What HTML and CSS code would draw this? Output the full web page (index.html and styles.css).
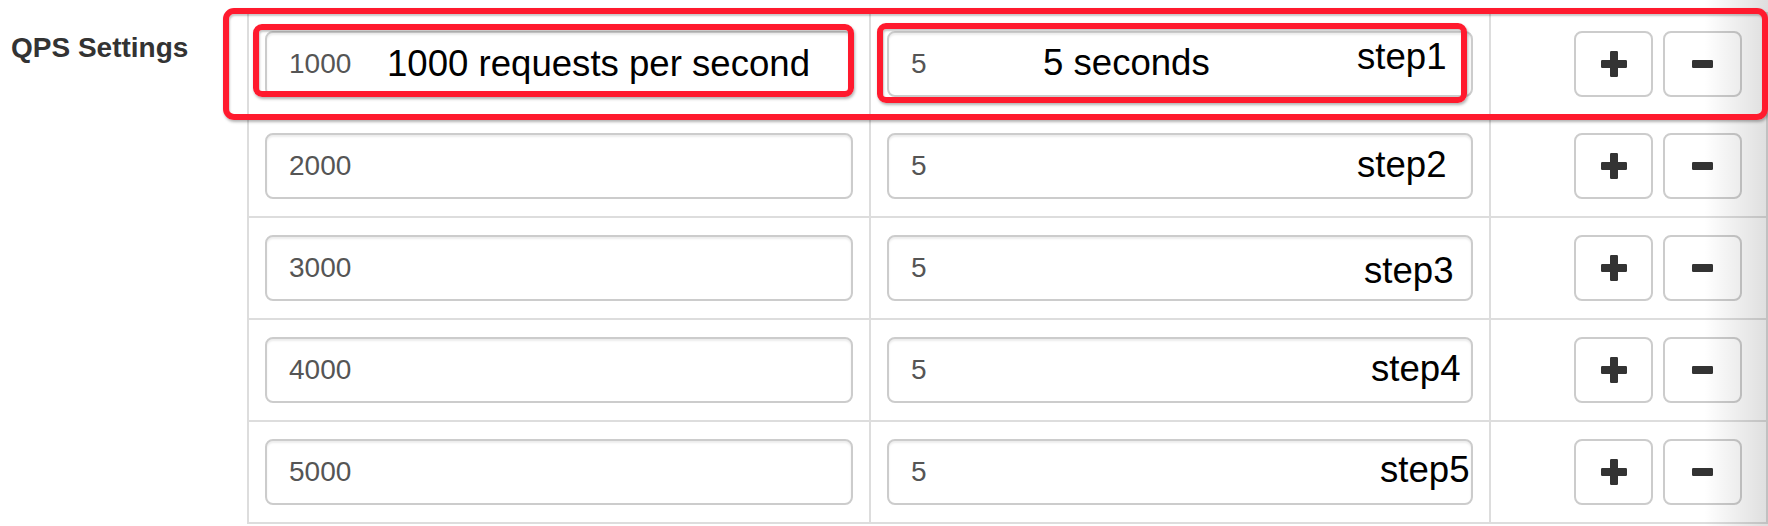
FILE: index.html
```html
<!DOCTYPE html>
<html>
<head>
<meta charset="utf-8">
<title>QPS Settings</title>
<link rel="stylesheet" href="styles.css">
</head>
<body>
<div class="page">
  <div class="form-row">
    <div class="row-label">QPS Settings</div>
    <div class="qps-table">
      <div class="cell"><div class="form-control">1000</div></div>
      <div class="cell"><div class="form-control">5</div></div>
      <div class="cell cell-actions">
        <button class="btn"><svg class="ico ico-plus" viewBox="0 0 26 26"><rect x="9" y="0" width="8" height="26" rx="1.2"/><rect x="0" y="9" width="26" height="8" rx="1.2"/></svg></button>
        <button class="btn"><svg class="ico ico-minus" viewBox="0 0 21 8"><rect x="0" y="0" width="21" height="8" rx="1.2"/></svg></button>
      </div>

      <div class="cell"><div class="form-control">2000</div></div>
      <div class="cell"><div class="form-control">5</div></div>
      <div class="cell cell-actions">
        <button class="btn"><svg class="ico ico-plus" viewBox="0 0 26 26"><rect x="9" y="0" width="8" height="26" rx="1.2"/><rect x="0" y="9" width="26" height="8" rx="1.2"/></svg></button>
        <button class="btn"><svg class="ico ico-minus" viewBox="0 0 21 8"><rect x="0" y="0" width="21" height="8" rx="1.2"/></svg></button>
      </div>

      <div class="cell"><div class="form-control">3000</div></div>
      <div class="cell"><div class="form-control">5</div></div>
      <div class="cell cell-actions">
        <button class="btn"><svg class="ico ico-plus" viewBox="0 0 26 26"><rect x="9" y="0" width="8" height="26" rx="1.2"/><rect x="0" y="9" width="26" height="8" rx="1.2"/></svg></button>
        <button class="btn"><svg class="ico ico-minus" viewBox="0 0 21 8"><rect x="0" y="0" width="21" height="8" rx="1.2"/></svg></button>
      </div>

      <div class="cell"><div class="form-control">4000</div></div>
      <div class="cell"><div class="form-control">5</div></div>
      <div class="cell cell-actions">
        <button class="btn"><svg class="ico ico-plus" viewBox="0 0 26 26"><rect x="9" y="0" width="8" height="26" rx="1.2"/><rect x="0" y="9" width="26" height="8" rx="1.2"/></svg></button>
        <button class="btn"><svg class="ico ico-minus" viewBox="0 0 21 8"><rect x="0" y="0" width="21" height="8" rx="1.2"/></svg></button>
      </div>

      <div class="cell"><div class="form-control">5000</div></div>
      <div class="cell"><div class="form-control">5</div></div>
      <div class="cell cell-actions">
        <button class="btn"><svg class="ico ico-plus" viewBox="0 0 26 26"><rect x="9" y="0" width="8" height="26" rx="1.2"/><rect x="0" y="9" width="26" height="8" rx="1.2"/></svg></button>
        <button class="btn"><svg class="ico ico-minus" viewBox="0 0 21 8"><rect x="0" y="0" width="21" height="8" rx="1.2"/></svg></button>
      </div>
    </div>
  </div>

  <div class="edge-shade"></div>

  <div class="annot annot-row"></div>
  <div class="annot annot-qps"></div>
  <div class="annot annot-dur"></div>

  <span class="note note-qps">1000 requests per second</span>
  <span class="note note-dur">5 seconds</span>
  <span class="note step step1">step1</span>
  <span class="note step step2">step2</span>
  <span class="note step step3">step3</span>
  <span class="note step step4">step4</span>
  <span class="note step step5">step5</span>
</div>
</body>
</html>
```

FILE: styles.css
```css
* {
  box-sizing: border-box;
}

html, body {
  margin: 0;
  padding: 0;
  background: #fff;
}

body {
  font-family: "Liberation Sans", Arial, Helvetica, sans-serif;
  color: #333;
  width: 1768px;
  height: 526px;
  overflow: hidden;
}

.page {
  position: relative;
  width: 1768px;
  height: 526px;
  padding-top: 12px;
}

.form-row {
  display: flex;
  align-items: flex-start;
}

.row-label {
  width: 247px;
  flex: 0 0 247px;
  padding: 16px 0 0 11px;
  font-size: 28px;
  line-height: 40px;
  font-weight: bold;
  color: #333;
}

.qps-table {
  flex: 1 1 auto;
  display: grid;
  grid-template-columns: 622px 620px 1fr;
  border-top: 2px solid #ddd;
  border-left: 2px solid #ddd;
}

.cell {
  padding: 17px 16px;
  border-right: 2px solid #ddd;
  border-bottom: 2px solid #ddd;
}

.form-control {
  height: 66px;
  border: 2px solid #ccc;
  border-radius: 8px;
  padding: 0 22px;
  display: flex;
  align-items: center;
  font-size: 28px;
  color: #555;
  background: #fff;
  box-shadow: inset 0 2px 2px rgba(0, 0, 0, 0.075);
}

.cell-actions {
  display: flex;
  gap: 10px;
  padding-left: 83px;
}

.btn {
  width: 79px;
  height: 66px;
  border: 2px solid #ccc;
  border-radius: 8px;
  background: #fff;
  padding: 0;
  display: flex;
  align-items: center;
  justify-content: center;
  cursor: pointer;
}

.ico {
  fill: #333;
  display: block;
}

.ico-plus {
  width: 26px;
  height: 26px;
}

.ico-minus {
  width: 21px;
  height: 8px;
}

.edge-shade {
  position: absolute;
  top: 0;
  right: 0;
  width: 64px;
  height: 526px;
  background: linear-gradient(to right, rgba(0, 0, 0, 0), rgba(0, 0, 0, 0.13));
  pointer-events: none;
}

.annot {
  position: absolute;
  border: 6px solid #ff1a2e;
  box-shadow: 1px 2px 3px rgba(0, 0, 0, 0.3), inset 1px 2px 2px rgba(0, 0, 0, 0.22);
  pointer-events: none;
}

.annot-row {
  left: 223px;
  top: 8px;
  width: 1545px;
  height: 112px;
  border-radius: 11px;
}

.annot-qps {
  left: 253px;
  top: 24px;
  width: 601px;
  height: 73px;
  border-radius: 9px;
}

.annot-dur {
  left: 877px;
  top: 23px;
  width: 590px;
  height: 80px;
  border-radius: 9px;
}

.note {
  position: absolute;
  font-family: "Liberation Sans", Arial, Helvetica, sans-serif;
  font-size: 36.6px;
  line-height: 37px;
  color: #000;
  white-space: nowrap;
}

.note-qps {
  left: 387px;
  top: 45px;
}

.note-dur {
  left: 1043px;
  top: 44px;
}

.step1 {
  left: 1357px;
  top: 38px;
}

.step2 {
  left: 1357px;
  top: 146px;
}

.step3 {
  left: 1364px;
  top: 252px;
}

.step4 {
  left: 1371px;
  top: 350px;
}

.step5 {
  left: 1380px;
  top: 451px;
}
```
